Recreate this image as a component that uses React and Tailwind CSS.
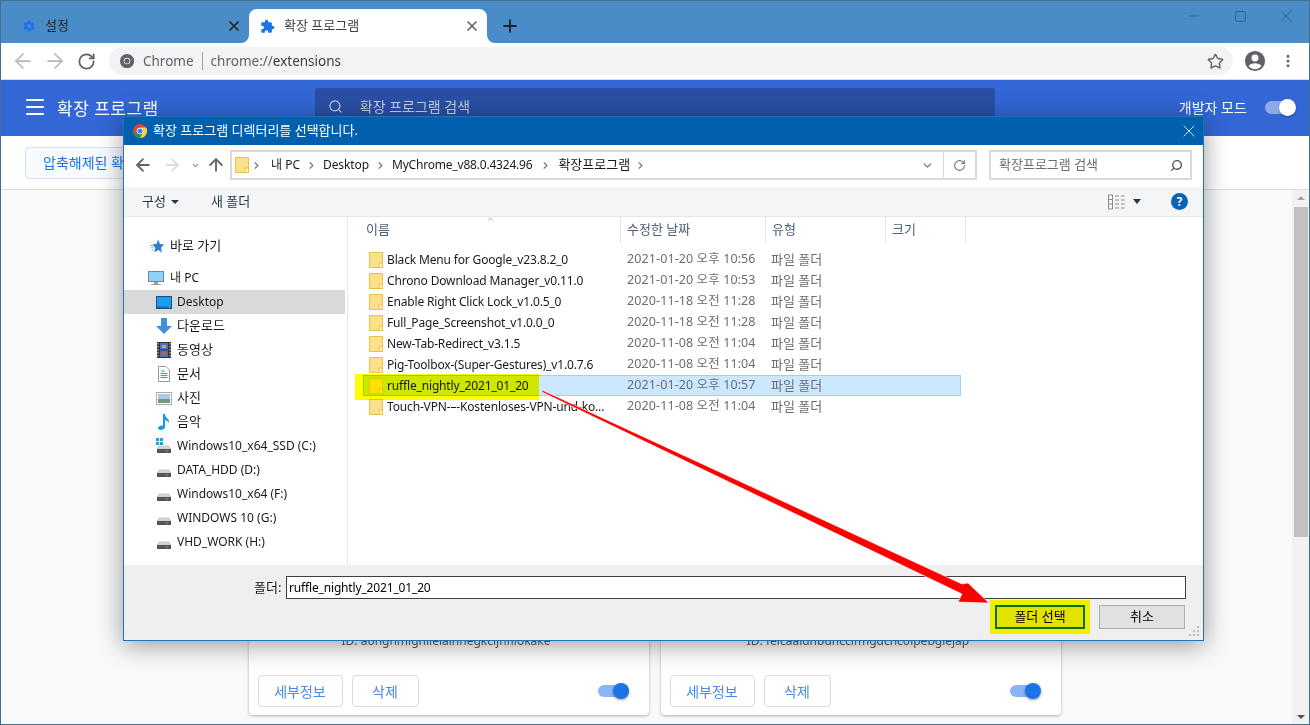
import { ArrowLeft, ArrowRight, ArrowUp, ChevronDown, ChevronRight, ChevronUp, EllipsisVertical, Menu, Minus, Plus, RotateCw, Search, Square, Star, X } from 'lucide-react';

const kr = 'font-["Noto_Sans","Noto_Sans_CJK_KR",sans-serif]';

const SETTINGS_PATH = 'M19.14 12.94c.04-.3.06-.61.06-.94 0-.32-.02-.64-.07-.94l2.03-1.58c.18-.14.23-.41.12-.61l-1.92-3.32c-.12-.22-.37-.29-.59-.22l-2.39.96c-.5-.38-1.03-.7-1.62-.94l-.36-2.54c-.04-.24-.24-.41-.48-.41h-3.84c-.24 0-.43.17-.47.41l-.36 2.54c-.59.24-1.13.57-1.62.94l-2.39-.96c-.22-.08-.47 0-.59.22L2.74 8.87c-.12.21-.08.47.12.61l2.03 1.58c-.05.3-.09.63-.09.94s.02.64.07.94l-2.03 1.58c-.18.14-.23.41-.12.61l1.92 3.32c.12.22.37.29.59.22l2.39-.96c.5.38 1.03.7 1.62.94l.36 2.54c.05.24.24.41.48.41h3.84c.24 0 .44-.17.47-.41l.36-2.54c.59-.24 1.13-.56 1.62-.94l2.39.96c.22.08.47 0 .59-.22l1.92-3.32c.12-.22.07-.47-.12-.61l-2.01-1.58zM12 15.6c-1.98 0-3.6-1.62-3.6-3.6s1.62-3.6 3.6-3.6 3.6 1.62 3.6 3.6-1.62 3.6-3.6 3.6z';
const PUZZLE_PATH = 'M20.5 11H19V7c0-1.1-.9-2-2-2h-4V3.5C13 2.12 11.88 1 10.5 1S8 2.12 8 3.5V5H4c-1.1 0-1.99.9-1.99 2v3.8H3.5c1.49 0 2.7 1.21 2.7 2.7s-1.21 2.7-2.7 2.7H2V20c0 1.1.9 2 2 2h3.8v-1.5c0-1.49 1.21-2.7 2.7-2.7 1.49 0 2.7 1.21 2.7 2.7V22H17c1.1 0 2-.9 2-2v-4h1.5c1.38 0 2.5-1.12 2.5-2.5S21.88 11 20.5 11z';

const FILES = [
  { name: 'Black Menu for Google_v23.8.2_0', date: '2021-01-20 오후 10:56' },
  { name: 'Chrono Download Manager_v0.11.0', date: '2021-01-20 오후 10:53' },
  { name: 'Enable Right Click Lock_v1.0.5_0', date: '2020-11-18 오전 11:28' },
  { name: 'Full_Page_Screenshot_v1.0.0_0', date: '2020-11-18 오전 11:28' },
  { name: 'New-Tab-Redirect_v3.1.5', date: '2020-11-08 오전 11:04' },
  { name: 'Pig-Toolbox-(Super-Gestures)_v1.0.7.6', date: '2020-11-08 오전 11:04' },
  { name: 'ruffle_nightly_2021_01_20', date: '2021-01-20 오후 10:57', selected: true },
  { name: 'Touch-VPN-–-Kostenloses-VPN-und-ko...', date: '2020-11-08 오전 11:04' },
];

const ChromeLogo = ({ size = 14, mono = false }) => (
  <svg width={size} height={size} viewBox="0 0 24 24" className="shrink-0">
    <circle cx="12" cy="12" r="12" fill={mono ? '#5f6368' : '#db4437'} />
    <path d="M12 12 L1.6 18 A12 12 0 0 0 12 24 L18 13.5 Z" fill={mono ? '#5f6368' : '#0f9d58'} />
    <path d="M12 6 H22.4 A12 12 0 0 1 12 24 L17.2 15 Z" fill={mono ? '#5f6368' : '#ffcd40'} />
    <circle cx="12" cy="12" r="5.6" fill="#fff" />
    <circle cx="12" cy="12" r="4.4" fill={mono ? '#5f6368' : '#4285f4'} />
  </svg>
);

const FolderIcon = ({ selected }) => (
  <svg width="14" height="16" viewBox="0 0 14 16" className="shrink-0">
    <rect x="0.5" y="0.5" width="13" height="15" fill={selected ? '#ffe24a' : '#fde08a'} stroke="#e8c14e" />
    <rect x="10" y="11" width="3.5" height="4.5" fill="#fff3c4" stroke="#e8c14e" />
  </svg>
);

const DriveIcon = ({ win }) => (
  <svg width="16" height="16" viewBox="0 0 16 16" className="shrink-0">
    {win && (
      <g fill="#1aa3e8">
        <rect x="0" y="0" width="3" height="3" />
        <rect x="4" y="0" width="3" height="3" />
        <rect x="0" y="4" width="3" height="3" />
        <rect x="4" y="4" width="3" height="3" />
      </g>
    )}
    <path d="M3 8 H13 L15 11 H1 Z" fill="#d8d8d8" stroke="#aaa" strokeWidth="0.5" />
    <rect x="1" y="11" width="14" height="4" fill="#555" />
    <rect x="10" y="12.5" width="1.5" height="1" fill="#5fe05f" />
  </svg>
);

const SidebarIcon = ({ type }) => {
  if (type === 'desktop')
    return (
      <svg width="16" height="13" viewBox="0 0 16 13" className="shrink-0">
        <rect x="0.5" y="0.5" width="15" height="12" fill="#1c9cf0" stroke="#1f4e79" />
        <rect x="1" y="10.5" width="14" height="1.5" fill="#0b6fc0" />
        <rect x="13" y="10.5" width="1" height="1" fill="#fff" />
      </svg>
    );
  if (type === 'down')
    return (
      <svg width="16" height="16" viewBox="0 0 16 16" className="shrink-0">
        <path d="M5 0 H11 V8 H16 L8 16 L0 8 H5 Z" fill="#3f8fdc" />
      </svg>
    );
  if (type === 'video')
    return (
      <svg width="14" height="16" viewBox="0 0 14 16" className="shrink-0">
        <rect width="14" height="16" fill="#333" />
        <path d="M1 1v1.500M1 4v1.500M1 7v1.500M1 10v1.500M1 13v1.500M13 1v1.500M13 4v1.500M13 7v1.500M13 10v1.500M13 13v1.500" stroke="#ddd" />
        <rect x="3" y="1" width="8" height="6.500" fill="#3c78c8" />
        <rect x="3" y="8.500" width="8" height="6.500" fill="#3c78c8" />
        <rect x="5" y="3" width="4" height="3" fill="#e0a030" />
        <rect x="5" y="10" width="4" height="3" fill="#d85a3a" />
      </svg>
    );
  if (type === 'doc')
    return (
      <svg width="12" height="16" viewBox="0 0 12 16" className="shrink-0">
        <path d="M0.5 0.5 H8 L11.5 4 V15.5 H0.5 Z" fill="#fff" stroke="#999" />
        <path d="M3 5 H7 M2.5 7.5 H9.5 M2.5 9.5 H9.5 M2.5 11.5 H9.5" stroke="#4a8cc7" />
      </svg>
    );
  if (type === 'pic')
    return (
      <svg width="16" height="13" viewBox="0 0 16 13" className="shrink-0">
        <rect x="0.5" y="0.5" width="15" height="12" fill="#fff" stroke="#aaa" />
        <rect x="2" y="2" width="12" height="5" fill="#a9cbe8" />
        <rect x="2" y="7" width="12" height="4" fill="#6f9a7c" />
      </svg>
    );
  if (type === 'music')
    return (
      <svg width="13" height="16" viewBox="0 0 13 16" className="shrink-0">
        <path d="M5 0 H7 C7 4 12 5 11 9 C10 7 8.5 6.5 7 6 V13 C7 15 4.5 16 2.5 16 C1 16 0 15 0 14 C0 12.5 2.5 11 5 11.5 Z" fill="#1a9be8" />
      </svg>
    );
  return null;
};

const SideRow = ({ icon, label, active, latin }) => (
  <div className={`flex items-center h-[24px] pl-[32px] gap-[5px] ${active ? 'bg-[#d9d9d9]' : ''}`}>
    <span className="w-[16px] flex justify-center">{icon}</span>
    <span className={latin ? '' : 'text-[13px]'}>{label}</span>
  </div>
);

const HeaderCell = ({ width, label, className = '' }) => (
  <div className={`h-full flex items-center pl-[6px] border-r border-[#e5e5e5] text-[13px] text-[#4c607a] ${width} ${className}`}>{label}</div>
);

const FileDialog = () => (
  <div className={`absolute left-[122px] top-[115px] w-[1081px] h-[525px] flex flex-col bg-white border border-[#1a75bb] shadow-[0_4px_24px_rgba(0,0,0,0.4)] text-[12px] text-[#1a1a1a] ${kr}`}>
    {/* title */}
    <div className="h-[28px] shrink-0 bg-[#0060ae] flex items-center pl-[9px] pr-[4px] text-white">
      <ChromeLogo size={14} />
      <span className="ml-[6px] text-[13px]">확장 프로그램 디렉터리를 선택합니다.</span>
      <X className="ml-auto w-[20px] h-[20px]" strokeWidth={1} />
    </div>

    {/* nav row */}
    <div className="h-[42px] shrink-0 flex items-center pb-[2px]">
      <ArrowLeft className="ml-[9px] w-[20px] h-[20px] text-[#666]" strokeWidth={2.25} />
      <ArrowRight className="ml-[9px] w-[20px] h-[20px] text-[#ddd]" strokeWidth={2.25} />
      <ChevronDown className="ml-[9px] w-[9px] h-[9px] text-[#888]" strokeWidth={3} />
      <ArrowUp className="ml-[6px] w-[20px] h-[20px] text-[#666]" strokeWidth={2.25} />
      <div className="ml-[4px] w-[747px] h-[30px] flex items-center border-2 border-[#d9d9d9]">
        <span className="ml-[3px]"><FolderIcon /></span>
        <ChevronRight className="ml-[2px] w-[11px] h-[11px] text-[#777]" strokeWidth={2.5} />
        <span className="ml-[9px]">내 PC</span>
        <ChevronRight className="ml-[6px] w-[11px] h-[11px] text-[#777]" strokeWidth={2.5} />
        <span className="ml-[6px] tracking-[-0.1px]">Desktop</span>
        <ChevronRight className="ml-[6px] w-[11px] h-[11px] text-[#777]" strokeWidth={2.5} />
        <span className="ml-[6px] tracking-[-0.2px]">MyChrome_v88.0.4324.96</span>
        <ChevronRight className="ml-[8px] w-[11px] h-[11px] text-[#777]" strokeWidth={2.5} />
        <span className="ml-[7px] text-[13px]">확장프로그램</span>
        <ChevronRight className="ml-[5px] w-[11px] h-[11px] text-[#777]" strokeWidth={2.5} />
        <ChevronDown className="ml-auto mr-[9px] w-[13px] h-[13px] text-[#777]" strokeWidth={2.5} />
        <div className="w-[32px] h-full flex items-center justify-center border-l border-[#d9d9d9]">
          <RotateCw className="w-[13px] h-[13px] text-[#777]" strokeWidth={2} />
        </div>
      </div>
      <div className="ml-[12px] w-[203px] h-[30px] flex items-center justify-between pl-[8px] pr-[7px] border-2 border-[#d9d9d9] text-[13px] text-[#6d6d6d]">
        <span>확장프로그램 검색</span>
        <Search className="w-[13px] h-[13px] -scale-x-100 text-[#555]" strokeWidth={2.5} />
      </div>
    </div>

    {/* toolbar */}
    <div className="h-[30px] shrink-0 flex items-center bg-[#f4f5f7] border-b border-[#e6e6e6] text-[13px] text-[#26374d]">
      <span className="ml-[18px]">구성</span>
      <span className="ml-[5px] w-0 h-0 border-x-[4px] border-x-transparent border-t-[4px] border-t-[#26374d]" />
      <span className="ml-[32px]">새 폴더</span>
      <svg width="17" height="16" viewBox="0 0 17 16" className="ml-auto">
        <path d="M0.5 1 H4.5 V15 H0.5 Z M0.5 5.5 H4.5 M0.5 10 H4.5" fill="none" stroke="#8a8a8a" />
        <path d="M7 2 H11 M13 2 H16.5 M7 6 H11 M13 6 H16.5 M7 10 H11 M13 10 H16.5 M7 14 H11 M13 14 H16.5" stroke="#8a8a8a" />
      </svg>
      <span className="ml-[8px] w-0 h-0 border-x-[4px] border-x-transparent border-t-[5px] border-t-[#26374d]" />
      <span className="ml-[30px] mr-[15px] w-[17px] h-[17px] rounded-full bg-[#0a63b5] text-white font-bold flex items-center justify-center text-[12px]">?</span>
    </div>

    {/* body */}
    <div className="flex-1 flex min-h-0">
      <div className="w-[224px] shrink-0 pt-[17px] border-r border-[#e8e8e8]">
        <div className="pr-[2px] flex flex-col">
          <div className="flex items-center h-[24px] pl-[26px] gap-[6px]">
            <svg width="14" height="14" viewBox="0 0 24 24" className="shrink-0">
              <path d="M14 1 L17 8.500 L24 9.500 L19 15 L20.500 23 L14 19 L7.500 23 L9 15 L4 9.500 L11 8.500 Z" fill="#2f7fd0" />
              <path d="M0 11 H5 M1 15 H6 M3 19 H7" stroke="#6fb0ea" strokeWidth="1.500" />
            </svg>
            <span className="text-[13px]">바로 가기</span>
          </div>
          <div className="flex items-center h-[24px] mt-[8px] pl-[24px] gap-[6px]">
            <svg width="16" height="15" viewBox="0 0 16 15" className="shrink-0">
              <rect x="0.5" y="0.5" width="15" height="10" fill="#8fd0f8" stroke="#6b8aa0" />
              <path d="M6 11 H10 V13 H13 V14 H3 V13 H6 Z" fill="#9a9a9a" />
            </svg>
            <span>내 PC</span>
          </div>
          <SideRow active latin icon={<SidebarIcon type="desktop" />} label="Desktop" />
          <SideRow icon={<SidebarIcon type="down" />} label="다운로드" />
          <SideRow icon={<SidebarIcon type="video" />} label="동영상" />
          <SideRow icon={<SidebarIcon type="doc" />} label="문서" />
          <SideRow icon={<SidebarIcon type="pic" />} label="사진" />
          <SideRow icon={<SidebarIcon type="music" />} label="음악" />
          <SideRow latin icon={<DriveIcon win />} label="Windows10_x64_SSD (C:)" />
          <SideRow latin icon={<DriveIcon />} label="DATA_HDD (D:)" />
          <SideRow latin icon={<DriveIcon />} label="Windows10_x64 (F:)" />
          <SideRow latin icon={<DriveIcon />} label="WINDOWS 10 (G:)" />
          <SideRow latin icon={<DriveIcon />} label="VHD_WORK (H:)" />
        </div>
      </div>

      <div className="flex-1 flex flex-col">
        <div className="relative h-[26px] shrink-0 flex items-center">
          <ChevronUp className="absolute left-[137px] -top-[2px] w-[11px] h-[8px] text-[#888]" strokeWidth={2} />
          <HeaderCell width="w-[273px]" label="이름" className="pl-[18px]" />
          <HeaderCell width="w-[145px]" label="수정한 날짜" />
          <HeaderCell width="w-[120px]" label="유형" />
          <HeaderCell width="w-[80px]" label="크기" />
        </div>
        <div className="pt-[6px] pl-[15px] w-[613px]">
          {FILES.map((f) => (
            <div
              key={f.name}
              className={`flex items-center h-[21px] border ${f.selected ? 'bg-[#cce8ff] border-[#99d1ff]' : 'border-transparent'}`}
            >
              <span className="ml-[5px]"><FolderIcon selected={f.selected} /></span>
              <span className="ml-[4px] w-[240px] whitespace-nowrap tracking-[-0.16px]">{f.name}</span>
              <span className="text-[12.5px] tracking-[0.1px] text-[#6d6d6d] w-[144px]">{f.date}</span>
              <span className="text-[13px] text-[#6d6d6d]">파일 폴더</span>
            </div>
          ))}
        </div>
      </div>
    </div>

    {/* footer */}
    <div className="relative h-[75px] shrink-0 bg-[#efefef]">
      <div className="flex items-center h-[23px] mt-[11px] pr-[17px]">
        <span className="ml-[130px] w-[32px] text-[13px]">폴더:</span>
        <div className="flex-1 h-[23px] bg-white border border-[#404040] px-[2px] flex items-center text-black tracking-[-0.16px]">ruffle_nightly_2021_01_20</div>
      </div>
      <div className="flex justify-end gap-[14px] mt-[6px] pr-[18px] text-[13px]">
        <div className="w-[90px] h-[24px] flex items-center justify-center bg-[#e3e300] border-2 border-[#0a6e0a] outline-[5px] outline-[#eeee00] text-black">폴더 선택</div>
        <div className="w-[86px] h-[24px] flex items-center justify-center bg-[#e1e1e1] border border-[#adadad] text-black">취소</div>
      </div>
      <svg width="11" height="11" viewBox="0 0 11 11" className="absolute right-[3px] bottom-[3px]">
        <path d="M8 0h2v2H8z M4 4h2v2H4z M8 4h2v2H8z M0 8h2v2H0z M4 8h2v2H4z M8 8h2v2H8z" fill="#bbb" />
      </svg>
    </div>
  </div>
);

const ExtCard = ({ id }) => (
  <div className="w-[400px] h-[150px] bg-white rounded-[4px] shadow-[0_1px_3px_rgba(60,64,67,0.4)] flex flex-col justify-end items-center pb-[8px] px-[9px]">
    <p className="text-[12px] text-[#5f6368] pr-[5px] mb-[25px]">{id}</p>
    <div className="w-full flex items-center gap-[9px]">
      <button className="w-[85px] h-[32px] rounded-[4px] border border-[#dadce0] text-[14px] text-[#4a8ae8]">세부정보</button>
      <button className="w-[67px] h-[32px] rounded-[4px] border border-[#dadce0] text-[14px] text-[#4a8ae8]">삭제</button>
      <div className="relative ml-auto mr-[14px] w-[28px] h-[12px] rounded-full bg-[#8ab4f8]">
        <span className="absolute -right-[3px] -top-[2px] w-[16px] h-[16px] rounded-full bg-[#1a73e8] shadow-[0_1px_3px_rgba(0,0,0,0.4)]" />
      </div>
    </div>
  </div>
);

const Annotation = () => (
  <>
    <div className="absolute left-[354px] top-[373px] w-[184px] h-[26px] bg-[#ffff00] mix-blend-multiply" />
    <svg width="1310" height="725" className="absolute -left-px -top-px pointer-events-none">
      <polygon
        points="542,390 962,584 968,583 989,603 958,602 962,594 542,392"
        fill="#ff0000"
        stroke="#fff"
        strokeWidth="0.6"
      />
    </svg>
  </>
);

const App = () => (
  <div className={`relative w-[1310px] h-[725px] overflow-hidden flex flex-col border border-[#44708f] bg-white ${kr}`}>
    {/* tab strip */}
    <div className="h-[42px] shrink-0 bg-[#4a8cc7] flex items-end text-[12px]">
      <div className="w-[248px] h-[34px] flex items-center pl-[21px] pr-[7px] text-[#222]">
        <svg width="14" height="14" viewBox="0 0 24 24" fill="#1a73e8"><path d={SETTINGS_PATH} /></svg>
        <span className="ml-[9px] text-[13px]">설정</span>
        <X className="ml-auto w-[16px] h-[16px] text-[#222]" strokeWidth={2.5} />
      </div>
      <div className="relative w-[238px] h-[34px] bg-white rounded-t-[8px] flex items-center pl-[11px] pr-[7px] text-[#3c4043]">
        <svg width="8" height="8" viewBox="0 0 8 8" className="absolute -left-[8px] bottom-0" fill="#fff"><path d="M8 0 V8 H0 A8 8 0 0 0 8 0 Z" /></svg>
        <svg width="15" height="15" viewBox="0 0 24 24" fill="#1a73e8"><path d={PUZZLE_PATH} /></svg>
        <span className="ml-[9px] text-[13px]">확장 프로그램</span>
        <X className="ml-auto w-[16px] h-[16px] text-[#5f6368]" strokeWidth={2.5} />
        <svg width="8" height="8" viewBox="0 0 8 8" className="absolute -right-[8px] bottom-0" fill="#fff"><path d="M0 0 V8 H8 A8 8 0 0 1 0 0 Z" /></svg>
      </div>
      <Plus className="ml-[13px] mb-[7px] w-[20px] h-[20px] text-[#202124]" strokeWidth={2.25} />
      <div className="ml-auto self-start flex items-center pt-[5px] text-[#2a5a85]">
        <span className="w-[46px] flex justify-center"><Minus className="w-[16px] h-[16px]" strokeWidth={1.25} /></span>
        <span className="w-[46px] flex justify-center"><Square className="w-[13px] h-[13px]" strokeWidth={1.5} /></span>
        <span className="w-[46px] flex justify-center"><X className="w-[20px] h-[20px]" strokeWidth={1} /></span>
      </div>
    </div>

    {/* toolbar */}
    <div className="h-[37px] shrink-0 flex items-center border-b border-[#dadce0]">
      <ArrowLeft className="ml-[10px] w-[24px] h-[24px] text-[#b5b8bb]" strokeWidth={1.75} />
      <ArrowRight className="ml-[8px] w-[24px] h-[24px] text-[#b5b8bb]" strokeWidth={1.75} />
      <RotateCw className="ml-[10px] w-[19px] h-[19px] text-[#5f6368]" strokeWidth={2.25} />
      <div className="ml-[13px] w-[1124px] h-[28px] rounded-full bg-[#f1f3f4] flex items-center pl-[11px] pr-[9px] text-[13.5px]">
        <ChromeLogo size={14} mono />
        <span className="ml-[9px] text-[#5f6368]">Chrome</span>
        <span className="ml-[8px] h-[18px] w-px bg-[#a0a3a6]" />
        <span className="ml-[8px] text-[#5f6368]">chrome://<span className="text-[#3c4043]">extensions</span></span>
        <Star className="ml-auto w-[17px] h-[17px] text-[#5f6368]" strokeWidth={2} />
      </div>
      <svg width="22" height="22" viewBox="0 0 24 24" fill="#5f6368" className="ml-[11px]">
        <path d="M12 1a11 11 0 1 0 0 22 11 11 0 0 0 0-22zm0 4a3.8 3.8 0 1 1 0 7.6A3.8 3.8 0 0 1 12 5zm0 16c-2.9 0-5.4-1.4-7-3.5 1.2-1.9 4.300-3 7-3s5.800 1.100 7 3c-1.600 2.100-4.100 3.500-7 3.500z" />
      </svg>
      <EllipsisVertical className="ml-[14px] w-[16px] h-[16px] text-[#5f6368]" strokeWidth={2.5} />
    </div>

    {/* extensions header */}
    <div className="h-[56px] shrink-0 bg-[#3367d6] flex items-start text-white">
      <Menu className="ml-[22px] mt-[15px] w-[24px] h-[24px]" strokeWidth={2} />
      <span className="ml-[10px] mt-[16px] text-[17px] tracking-[0.5px]">확장 프로그램</span>
      <div className="ml-[156px] mt-[8px] w-[680px] h-[48px] rounded-t-[2px] bg-[#2a4fa5] flex items-start pt-[8px] pl-[13px] text-[14px] text-[#c5d0e8]">
        <Search className="w-[15px] h-[15px] mt-[3px]" strokeWidth={2} />
        <span className="ml-[17px]">확장 프로그램 검색</span>
      </div>
      <span className="ml-[184px] mt-[17px] text-[14px]">개발자 모드</span>
      <div className="relative ml-[18px] mt-[21px] w-[28px] h-[13px] rounded-full bg-[#8ea8e8]">
        <span className="absolute -right-[3px] -top-[2px] w-[17px] h-[17px] rounded-full bg-white shadow-[0_1px_2px_rgba(0,0,0,0.3)]" />
      </div>
    </div>

    {/* action bar */}
    <div className="h-[54px] shrink-0 flex items-center border-b border-[#dadce0] pl-[24px]">
      <div className="w-[200px] h-[32px] rounded-[4px] border border-[#cfe0f8] bg-[#f8fbff] flex items-center pl-[17px] text-[14px] text-[#1a73e8]">압축해제된 확장</div>
    </div>

    {/* content */}
    <div className="flex-1 flex min-h-0 bg-[#f8f9fa]">
      <div className="flex-1 flex justify-center items-end gap-[12px] pb-[9px] pl-[16px]">
        <ExtCard id="ID: aohghmighlieiainnegkcijnfilokake" />
        <ExtCard id="ID: feicaaidnbdnccifmgdchcolpebgiejap" />
      </div>
      <div className="w-[17px] shrink-0 bg-[#f1f1f1] flex flex-col items-center">
        <span className="mt-[6px] w-0 h-0 border-x-[4px] border-x-transparent border-b-[4px] border-b-[#a3a3a3]" />
        <span className="mt-[7px] w-[14px] h-[330px] bg-[#c1c1c1]" />
        <span className="mt-auto mb-[5px] w-0 h-0 border-x-[4px] border-x-transparent border-t-[4px] border-t-[#505050]" />
      </div>
    </div>

    <FileDialog />
    <Annotation />
  </div>
);

export default App;
